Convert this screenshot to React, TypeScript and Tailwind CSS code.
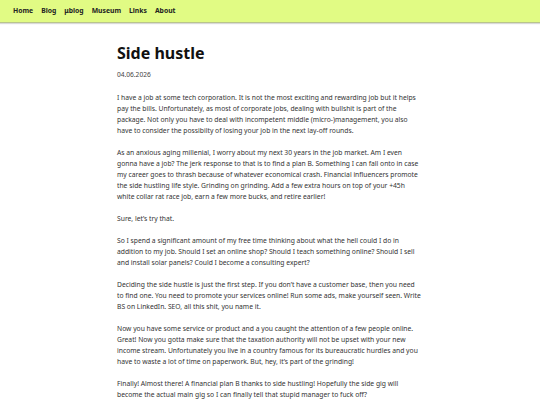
import React from 'react';

const NAV = ['Home', 'Blog', 'μblog', 'Museum', 'Links', 'About'];

const PARAGRAPHS = [
  'I have a job at some tech corporation. It is not the most exciting and rewarding job but it helps pay the bills. Unfortunately, as most of corporate jobs, dealing with bullshit is part of the package. Not only you have to deal with incompetent middle (micro-)management, you also have to consider the possibilty of losing your job in the next lay-off rounds.',
  'As an anxious aging millenial, I worry about my next 30 years in the job market. Am I even gonna have a job? The jerk response to that is to find a plan B. Something I can fall onto in case my career goes to thrash because of whatever economical crash. Financial influencers promote the side hustling life style. Grinding on grinding. Add a few extra hours on top of your +45h white collar rat race job, earn a few more bucks, and retire earlier!',
  'Sure, let\u2019s try that.',
  'So I spend a significant amount of my free time thinking about what the hell could I do in addition to my job. Should I set an online shop? Should I teach something online? Should I sell and install solar panels? Could I become a consulting expert?',
  'Deciding the side hustle is just the first step. If you don\u2019t have a customer base, then you need to\u00a0find one. You need to promote your services online! Run some ads, make yourself seen. Write BS\u00a0on LinkedIn. SEO, all this shit, you name it.',
  'Now you have some service or product and a you caught the attention of a few people online. Great! Now you gotta make sure that the taxation authority will not be upset with your new income stream. Unfortunately you live in a country famous for its bureaucratic hurdles and you have to waste a lot of time on paperwork. But, hey, it\u2019s part of the grinding!',
  'Finally! Almost there! A financial plan B thanks to side hustling! Hopefully the side gig will become the actual main gig so I can finally tell that stupid manager to fuck off?',
];

export default function App() {
  return (
    <div className="min-h-screen bg-white font-['Noto_Sans',sans-serif] text-[#222]">
      <nav className="h-[23px] bg-[#e1fb84] border-b border-[#b9c48c] shadow-[0_1px_1px_rgba(0,0,0,0.15)] flex items-center gap-[8px] px-[13px]">
        {NAV.map((item) => (
          <a key={item} className="text-[6.8px] font-bold text-[#222]">
            {item}
          </a>
        ))}
      </nav>

      <main className="w-[306px] mx-auto pt-[19px]">
        <h1 className="text-[16px] font-bold leading-[22px] text-[#111]">Side hustle</h1>
        <p className="mt-[6px] text-[6.6px] leading-[10px] text-[#444]">04.06.2026</p>

        <div className="mt-[12px]">
          {PARAGRAPHS.map((p, i) => (
            <p key={i} className="text-[6.75px] leading-[11px] text-[#333] mb-[11px]">
              {p}
            </p>
          ))}
        </div>
      </main>
    </div>
  );
}
